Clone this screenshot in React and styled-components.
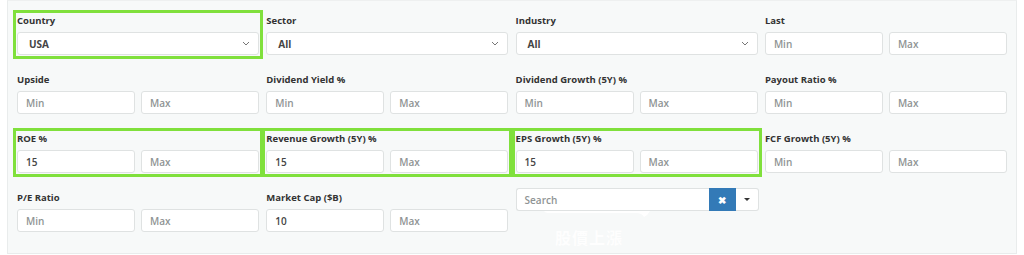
import React from 'react'
import styled, { createGlobalStyle } from 'styled-components'

const Global = createGlobalStyle`
  html, body {
    margin: 0;
    padding: 0;
    background: #ffffff;
  }
  body {
    font-family: "Open Sans", "Noto Sans", sans-serif;
    color: #333;
  }
`

const Panel = styled.div`
  position: relative;
  box-sizing: border-box;
  margin-left: 7px;
  width: 1010px;
  height: 254px;
  background: #f7f9f9;
  border: 1px solid #e9ecec;
  border-top-color: #eef0f0;
  padding: 13px 10px 0 9px;
`

const Grid = styled.div`
  display: grid;
  grid-template-columns: repeat(4, 242px);
  column-gap: 7.3px;
  row-gap: 18px;
`

const Cell = styled.div`
  display: flex;
  flex-direction: column;
  gap: 5px;
  outline: ${p => (p.$hl ? '3px solid #80e03c' : 'none')};
  outline-offset: 1px;
`

const Label = styled.div`
  font-size: 9.5px;
  font-weight: 700;
  line-height: 13px;
  color: #333;
  white-space: nowrap;
`

const Pair = styled.div`
  display: flex;
  gap: 6px;
`

const Input = styled.div`
  box-sizing: border-box;
  flex: 1;
  height: 23px;
  background: #fff;
  border: 1px solid #dfe2e2;
  border-radius: 3px;
  padding: 0 8px;
  display: flex;
  align-items: center;
  font-size: 10px;
  font-weight: 600;
  color: ${p => (p.$filled ? '#444' : '#8f9494')};
`

const Select = styled(Input)`
  padding: 0 8px 0 11px;
  justify-content: space-between;
  color: #444;
  font-weight: 700;
`

const Chevron = () => (
  <svg width="8" height="5" viewBox="0 0 8 5">
    <path d="M1 1 L4 4 L7 1" fill="none" stroke="#777" strokeWidth="1" />
  </svg>
)

const Combo = styled.div`
  display: flex;
  height: 23px;
  margin-top: -3px;
  width: 243px;
`

const SearchBox = styled.div`
  box-sizing: border-box;
  flex: 1;
  background: #fff;
  border: 1px solid #dfe2e2;
  border-right: none;
  border-radius: 3px 0 0 3px;
  padding: 0 8px;
  display: flex;
  align-items: center;
  font-size: 10px;
  font-weight: 600;
  color: #8f9494;
`

const ClearBtn = styled.div`
  width: 27px;
  background: #337ab7;
  display: flex;
  align-items: center;
  justify-content: center;
  color: #fff;
  font-size: 10px;
  font-weight: 700;
`

const CaretBtn = styled.div`
  box-sizing: border-box;
  width: 23px;
  background: #fff;
  border: 1px solid #dfe2e2;
  border-left: none;
  border-radius: 0 3px 3px 0;
  display: flex;
  align-items: center;
  justify-content: center;
`

const Caret = styled.span`
  width: 0;
  height: 0;
  border-left: 3px solid transparent;
  border-right: 3px solid transparent;
  border-top: 3px solid #333;
`

const Watermark = styled.div`
  position: absolute;
  left: 547px;
  top: 224px;
  font-family: "Noto Sans CJK TC", sans-serif;
  font-size: 16px;
  font-weight: 700;
  letter-spacing: 1px;
  color: #ffffff;
  opacity: 0.9;
`

const Blob = styled.svg`
  position: absolute;
  left: 530px;
  top: 209px;
`

const Range = ({ label, min, max, hl }) => (
  <Cell $hl={hl}>
    <Label>{label}</Label>
    <Pair>
      <Input $filled={!!min}>{min || 'Min'}</Input>
      <Input $filled={!!max}>{max || 'Max'}</Input>
    </Pair>
  </Cell>
)

const Drop = ({ label, value, hl }) => (
  <Cell $hl={hl}>
    <Label>{label}</Label>
    <Select>
      <span>{value}</span>
      <Chevron />
    </Select>
  </Cell>
)

export default function App() {
  return (
    <>
      <Global />
      <Panel>
        <Grid>
          <Drop label="Country" value="USA" hl />
          <Drop label="Sector" value="All" />
          <Drop label="Industry" value="All" />
          <Range label="Last" />

          <Range label="Upside" />
          <Range label="Dividend Yield %" />
          <Range label="Dividend Growth (5Y) %" />
          <Range label="Payout Ratio %" />

          <Range label="ROE %" min="15" hl />
          <Range label="Revenue Growth (5Y) %" min="15" hl />
          <Range label="EPS Growth (5Y) %" min="15" hl />
          <Range label="FCF Growth (5Y) %" />

          <Range label="P/E Ratio" />
          <Range label="Market Cap ($B)" min="10" />
          <Cell>
            <Combo>
              <SearchBox>Search</SearchBox>
              <ClearBtn>✖</ClearBtn>
              <CaretBtn><Caret /></CaretBtn>
            </Combo>
          </Cell>
        </Grid>
        <Blob width="120" height="10" viewBox="0 0 120 10">
          <path d="M6 1 H112 Q110 5 106 7 Q104 3 98 3 H10 Q7 3 6 1 Z" fill="#ffffff" />
        </Blob>
        <Watermark>股價上漲</Watermark>
      </Panel>
    </>
  )
}
